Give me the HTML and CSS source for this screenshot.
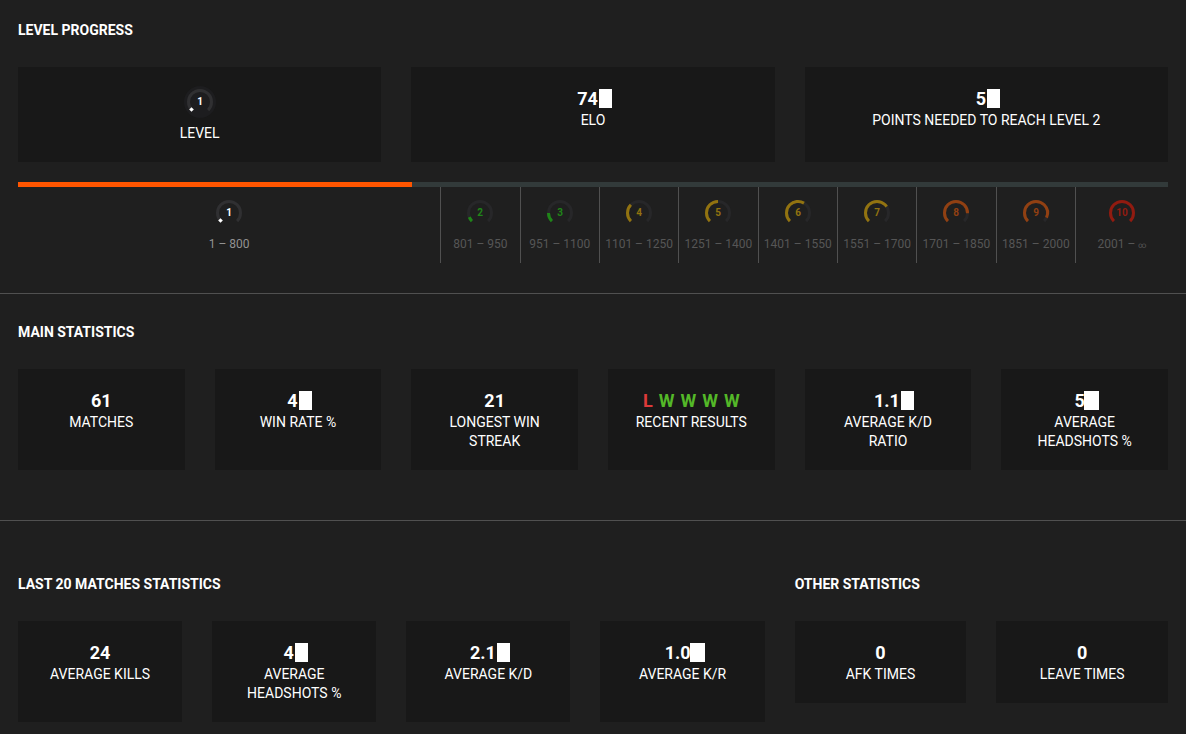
FILE: index.html
```html
<!DOCTYPE html>
<html lang="en">
<head>
<meta charset="utf-8">
<title>Player statistics</title>
<link rel="stylesheet" href="styles.css">
</head>
<body>
<main>
  <section class="section">
    <h2 class="title">LEVEL PROGRESS</h2>
    <div class="cards cards-3">
      <div class="card">
        <svg class="gauge gauge-card" viewBox="0 0 32 32" role="img" aria-label="Level 1"><circle class="disc" cx="16" cy="16" r="16"/><path class="track" d="M7.9 24.1A11.5 11.5 0 1 1 24.1 24.1"/><path class="dot" d="M7.5 21.2 9.8 23.5 7.5 25.8 5.2 23.5Z"/><text class="digit" x="16" y="19">1</text></svg>
        <div class="label">LEVEL</div>
      </div>
      <div class="card"><div class="value">74<span class="mask"></span></div><div class="label">ELO</div></div>
      <div class="card"><div class="value">5<span class="mask"></span></div><div class="label">POINTS NEEDED TO REACH LEVEL 2</div></div>
    </div>
    <div class="progress"><div class="progress-fill" style="width:34.3%"></div></div>
    <ol class="levels">
      <li class="level current"><svg class="gauge" viewBox="0 0 32 32"><path class="track" d="M7.9 24.1A11.5 11.5 0 1 1 24.1 24.1"/><path class="dot" d="M7.5 21.2 9.8 23.5 7.5 25.8 5.2 23.5Z"/><text class="digit" x="16" y="19">1</text></svg><span class="range">1 – 800</span></li>
      <li class="level green"><svg class="gauge" viewBox="0 0 32 32"><path class="track" d="M7.9 24.1A11.5 11.5 0 1 1 24.1 24.1"/><path class="arc" pathLength="270" stroke-dasharray="24 300" d="M7.9 24.1A11.5 11.5 0 1 1 24.1 24.1"/><text class="digit" x="16" y="19">2</text></svg><span class="range">801 – 950</span></li>
      <li class="level green"><svg class="gauge" viewBox="0 0 32 32"><path class="track" d="M7.9 24.1A11.5 11.5 0 1 1 24.1 24.1"/><path class="arc" pathLength="270" stroke-dasharray="45 300" d="M7.9 24.1A11.5 11.5 0 1 1 24.1 24.1"/><text class="digit" x="16" y="19">3</text></svg><span class="range">951 – 1100</span></li>
      <li class="level yellow"><svg class="gauge" viewBox="0 0 32 32"><path class="track" d="M7.9 24.1A11.5 11.5 0 1 1 24.1 24.1"/><path class="arc" pathLength="270" stroke-dasharray="90 300" d="M7.9 24.1A11.5 11.5 0 1 1 24.1 24.1"/><text class="digit" x="16" y="19">4</text></svg><span class="range">1101 – 1250</span></li>
      <li class="level yellow"><svg class="gauge" viewBox="0 0 32 32"><path class="track" d="M7.9 24.1A11.5 11.5 0 1 1 24.1 24.1"/><path class="arc" pathLength="270" stroke-dasharray="135 300" d="M7.9 24.1A11.5 11.5 0 1 1 24.1 24.1"/><text class="digit" x="16" y="19">5</text></svg><span class="range">1251 – 1400</span></li>
      <li class="level yellow"><svg class="gauge" viewBox="0 0 32 32"><path class="track" d="M7.9 24.1A11.5 11.5 0 1 1 24.1 24.1"/><path class="arc" pathLength="270" stroke-dasharray="166 300" d="M7.9 24.1A11.5 11.5 0 1 1 24.1 24.1"/><text class="digit" x="16" y="19">6</text></svg><span class="range">1401 – 1550</span></li>
      <li class="level yellow"><svg class="gauge" viewBox="0 0 32 32"><path class="track" d="M7.9 24.1A11.5 11.5 0 1 1 24.1 24.1"/><path class="arc" pathLength="270" stroke-dasharray="192 300" d="M7.9 24.1A11.5 11.5 0 1 1 24.1 24.1"/><text class="digit" x="16" y="19">7</text></svg><span class="range">1551 – 1700</span></li>
      <li class="level orange"><svg class="gauge" viewBox="0 0 32 32"><path class="track" d="M7.9 24.1A11.5 11.5 0 1 1 24.1 24.1"/><path class="arc" pathLength="270" stroke-dasharray="226 300" d="M7.9 24.1A11.5 11.5 0 1 1 24.1 24.1"/><text class="digit" x="16" y="19">8</text></svg><span class="range">1701 – 1850</span></li>
      <li class="level orange"><svg class="gauge" viewBox="0 0 32 32"><path class="track" d="M7.9 24.1A11.5 11.5 0 1 1 24.1 24.1"/><path class="arc" pathLength="270" stroke-dasharray="249 300" d="M7.9 24.1A11.5 11.5 0 1 1 24.1 24.1"/><text class="digit" x="16" y="19">9</text></svg><span class="range">1851 – 2000</span></li>
      <li class="level red"><svg class="gauge" viewBox="0 0 32 32"><path class="arc" d="M7.9 24.1A11.5 11.5 0 1 1 24.1 24.1"/><text class="digit" x="16" y="19">10</text></svg><span class="range">2001 – <span class="infinity">∞</span></span></li>
    </ol>
  </section>

  <section class="section section-main">
    <h2 class="title">MAIN STATISTICS</h2>
    <div class="cards cards-6">
      <div class="card"><div class="value">61</div><div class="label">MATCHES</div></div>
      <div class="card"><div class="value">4<span class="mask"></span></div><div class="label">WIN RATE %</div></div>
      <div class="card"><div class="value">21</div><div class="label">LONGEST WIN STREAK</div></div>
      <div class="card"><div class="value results"><span class="loss">L</span> <span class="win">W</span> <span class="win">W</span> <span class="win">W</span> <span class="win">W</span></div><div class="label">RECENT RESULTS</div></div>
      <div class="card"><div class="value">1.1<span class="mask mask-outer"></span></div><div class="label">AVERAGE K/D RATIO</div></div>
      <div class="card"><div class="value">5<span class="mask mask-wide"></span></div><div class="label">AVERAGE HEADSHOTS %</div></div>
    </div>
  </section>

  <div class="section section-split">
    <section>
      <h2 class="title">LAST 20 MATCHES STATISTICS</h2>
      <div class="cards cards-4">
        <div class="card"><div class="value">24</div><div class="label">AVERAGE KILLS</div></div>
        <div class="card"><div class="value">4<span class="mask"></span></div><div class="label">AVERAGE HEADSHOTS %</div></div>
        <div class="card"><div class="value">2.1<span class="mask"></span></div><div class="label">AVERAGE K/D</div></div>
        <div class="card"><div class="value">1.0<span class="mask mask-wide"></span></div><div class="label">AVERAGE K/R</div></div>
      </div>
    </section>
    <section>
      <h2 class="title">OTHER STATISTICS</h2>
      <div class="cards cards-2">
        <div class="card"><div class="value">0</div><div class="label">AFK TIMES</div></div>
        <div class="card"><div class="value">0</div><div class="label">LEAVE TIMES</div></div>
      </div>
    </section>
  </div>
</main>
</body>
</html>
```

FILE: styles.css
```css
* { box-sizing: border-box; }

body {
  margin: 0;
  background: #1f1f1f;
  color: #fff;
  font-family: Roboto, "Liberation Sans", sans-serif;
  font-size: 14px;
  line-height: 19px;
}

.section { padding: 21px 18px 30px; }
.section + .section { border-top: 1px solid #505050; }
.section.section-main { padding: 29px 18px 50px; }
.section.section-split {
  display: grid;
  grid-template-columns: 2fr 1fr;
  gap: 30px;
  padding: 54px 18px 12px;
}

.title {
  margin: 0 0 27px;
  font-size: 14px;
  font-weight: 700;
  line-height: 19px;
}

.cards { display: grid; gap: 30px; }
.cards-2 { grid-template-columns: repeat(2, 1fr); }
.cards-3 { grid-template-columns: repeat(3, 1fr); }
.cards-4 { grid-template-columns: repeat(4, 1fr); }
.cards-6 { grid-template-columns: repeat(6, 1fr); }

.card {
  padding: 19px 20px;
  background: #181818;
  text-align: center;
}

.value {
  display: flex;
  justify-content: center;
  align-items: center;
  gap: 1px;
  height: 25px;
  font-size: 18px;
  font-weight: 700;
}
.results { gap: 6px; }
.mask { width: 13px; height: 19px; margin-right: -3px; background: #fff; }
.mask-outer { margin-right: -12px; }
.mask-wide { width: 15px; margin: 0 -4px 0 -2px; }
.win { color: #54b828; }
.loss { color: #dc3a3a; }

.gauge { display: block; width: 32px; height: 32px; }
.gauge-card { margin: 0 auto 6px; }
.disc { fill: #1d1d1f; }
.track, .arc { fill: none; stroke-width: 3; }
.track { stroke: #303032; }
.arc { stroke: currentColor; }
.dot { fill: #fff; }
.digit {
  fill: currentColor;
  font-size: 10px;
  font-weight: 700;
  text-anchor: middle;
}

.progress { height: 5px; margin-top: 20px; background: #323a3a; }
.progress-fill { height: 100%; background: #ff5500; }

.levels {
  display: grid;
  grid-template-columns: 36.8% repeat(8, 6.9%) 1fr;
  margin: 0;
  padding: 0;
  list-style: none;
}
.level {
  display: flex;
  flex-direction: column;
  align-items: center;
  gap: 6px;
  padding: 10px 0;
  border-right: 1px solid #505050;
}
.level:last-child { border-right: 0; }
.range {
  color: #565656;
  font-size: 12px;
  line-height: 18px;
  white-space: nowrap;
}
.infinity { font-size: 8px; line-height: 8px; }
.current .range { color: #929292; }
.level:not(.current) .track { stroke: #272729; }
.green { color: #1f8518; }
.yellow { color: #927310; }
.orange { color: #914012; }
.red { color: #911b10; }
```
